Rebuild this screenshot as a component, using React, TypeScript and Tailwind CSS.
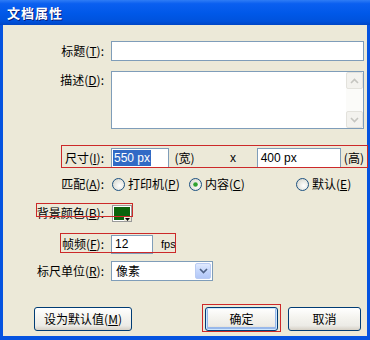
import type { ReactNode } from 'react';

const cjk = "font-['Noto_Sans_CJK_SC','Liberation_Sans',sans-serif]";
const latin = "font-['Liberation_Sans','DejaVu_Sans',sans-serif]";

function Label({ text, k }: { text: string; k: string }) {
  return (
    <span className={`block w-[101px] shrink-0 text-right text-[12px] leading-[14px] text-black ${cjk}`}>
      {text}(<u>{k}</u>):
    </span>
  );
}

function Radio({ checked, text, k, width }: { checked?: boolean; text: string; k: string; width: string }) {
  return (
    <div className={`flex items-center ${width}`}>
      <svg width="13" height="13" viewBox="0 0 13 13" className="shrink-0">
        <defs>
          <radialGradient id="rg" cx="0.6" cy="0.6" r="0.6">
            <stop offset="0" stopColor="#ffffff" />
            <stop offset="1" stopColor="#dcdcd3" />
          </radialGradient>
        </defs>
        <circle cx="6.5" cy="6.5" r="6" fill="url(#rg)" stroke="#1c5180" strokeWidth="1" />
        {checked && <circle cx="6.5" cy="6.5" r="2.3" fill="#2fa12f" />}
      </svg>
      <span className={`ml-[3px] text-[12px] leading-[14px] text-black ${cjk}`}>
        {text}(<u>{k}</u>)
      </span>
    </div>
  );
}

function XpButton({ children, isDefault, className = '' }: { children: ReactNode; isDefault?: boolean; className?: string }) {
  return (
    <div
      className={`flex h-[24px] items-center justify-center rounded-[3px] border border-[#003c74] bg-[linear-gradient(to_bottom,#ffffff_0%,#f4f3ee_45%,#ecebe6_80%,#d6d0c5_100%)] text-[12px] text-black ${cjk} ${
        isDefault ? 'shadow-[inset_0_0_0_1px_#cee7ff,inset_0_-1px_0_2px_#98b8ea]' : ''
      } ${className}`}
    >
      {children}
    </div>
  );
}

function Chevron({ up, color }: { up?: boolean; color: string }) {
  return (
    <svg width="9" height="6" viewBox="0 0 9 6">
      <path d={up ? 'M1 5 L4.5 1.5 L8 5' : 'M1 1 L4.5 4.5 L8 1'} fill="none" stroke={color} strokeWidth="1.6" />
    </svg>
  );
}

export default function App() {
  return (
    <div className="relative flex h-[340px] w-[370px] flex-col overflow-hidden bg-[#0553e0]">
      {/* title bar */}
      <div className="flex h-[25px] shrink-0 items-center bg-[linear-gradient(to_bottom,#2e7cf5_0%,#0a5ff0_15%,#0058e8_55%,#0052dc_85%,#0046c6_100%)] px-[7px]">
        <span className={`text-[13px] font-bold tracking-[1px] text-white [text-shadow:1px_1px_0_#0a1e7a] ${cjk}`}>文档属性</span>
      </div>

      {/* client area */}
      <div className="mx-[3px] mb-[4px] flex flex-1 flex-col bg-[#ece9d8] pr-[3px]">
        <div className="mt-[16px] flex h-[20px] items-center">
          <Label text="标题" k="T" />
          <div className="ml-[7px] h-[20px] flex-1 border border-[#7f9db9] bg-white" />
        </div>

        <div className="mt-[10px] flex items-start">
          <div className="shrink-0 pt-[2px]">
            <Label text="描述" k="D" />
          </div>
          <div className="ml-[7px] flex h-[58px] flex-1 border border-[#7f9db9] bg-white">
            <div className="flex-1" />
            <div className="flex w-[17px] flex-col justify-between bg-[#fbfbf9]">
              <div className="flex h-[17px] items-center justify-center rounded-[2px] border border-[#e3e2dc] bg-[#f3f2ee]">
                <Chevron up color="#c5c5c0" />
              </div>
              <div className="flex h-[17px] items-center justify-center rounded-[2px] border border-[#e3e2dc] bg-[#f3f2ee]">
                <Chevron color="#c5c5c0" />
              </div>
            </div>
          </div>
        </div>

        <div className="mt-[19px] flex h-[20px] items-center">
          <Label text="尺寸" k="I" />
          <div className="ml-[7px] flex h-[20px] w-[59px] items-center border border-[#7f9db9] bg-white pl-[1px]">
            <span className={`bg-[#316ac5] px-[1px] text-[12px] leading-[16px] text-white ${latin}`}>550 px</span>
          </div>
          <span className={`ml-[5px] w-[56px] text-[12px] text-black ${cjk}`}>(宽)</span>
          <span className={`w-[27px] text-[12px] text-black ${latin}`}>x</span>
          <div className="flex h-[20px] w-[85px] items-center border border-[#7f9db9] bg-white pl-[3px]">
            <span className={`text-[12px] text-black ${latin}`}>400 px</span>
          </div>
          <span className={`ml-[3px] text-[12px] text-black ${cjk}`}>(高)</span>
        </div>

        <div className="mt-[6px] flex h-[20px] items-center">
          <Label text="匹配" k="A" />
          <div className="ml-[8px] flex items-center">
            <Radio text="打印机" k="P" width="w-[77px]" />
            <Radio checked text="内容" k="C" width="w-[107px]" />
            <Radio text="默认" k="E" width="w-[60px]" />
          </div>
        </div>

        <div className="mt-[9px] flex h-[20px] items-center">
          <Label text="背景颜色" k="B" />
          <div className="relative ml-[8px] h-[17px] w-[20px] border border-[#9a9a9a] bg-white p-[1px]">
            <div className="h-full w-full bg-[#0b640b]" />
            <div className="absolute bottom-0 right-0 flex h-[5px] w-[7px] items-end justify-center bg-[#ece9d8]">
              <svg width="5" height="3" viewBox="0 0 5 3">
                <path d="M0 0 H5 L2.5 3 Z" fill="#000" />
              </svg>
            </div>
          </div>
        </div>

        <div className="mt-[11px] flex h-[20px] items-center">
          <Label text="帧频" k="F" />
          <div className="ml-[7px] flex h-[19px] w-[42px] items-center border border-[#7f9db9] bg-white pl-[3px]">
            <span className={`text-[12px] text-black ${latin}`}>12</span>
          </div>
          <span className={`ml-[8px] text-[11px] text-black ${latin}`}>fps</span>
        </div>

        <div className="mt-[7px] flex h-[20px] items-center">
          <Label text="标尺单位" k="R" />
          <div className="ml-[7px] flex h-[20px] w-[102px] items-center border border-[#7f9db9] bg-white p-[1px]">
            <span className={`flex-1 pl-[3px] text-[12px] text-black ${cjk}`}>像素</span>
            <div className="flex h-full w-[16px] items-center justify-center rounded-[2px] border border-[#b9cbf3] bg-[linear-gradient(to_bottom,#e1eafe_0%,#c4d6fc_50%,#b2c7f7_100%)]">
              <Chevron color="#4d6185" />
            </div>
          </div>
        </div>

        <div className="mt-[26px] flex h-[24px] items-center">
          <XpButton className="ml-[31px] w-[98px]">
            设为默认值(<u>M</u>)
          </XpButton>
          <XpButton isDefault className="ml-[73px] w-[73px]">
            确定
          </XpButton>
          <XpButton className="ml-[10px] w-[73px]">取消</XpButton>
        </div>
      </div>

      {/* red annotation boxes drawn over the dialog */}
      <div className="pointer-events-none absolute left-[61px] top-[145px] h-[23px] w-[307px] border border-[#cc2929]" />
      <div className="pointer-events-none absolute left-[36px] top-[203px] h-[14px] w-[97px] border border-[#cc2929]" />
      <div className="pointer-events-none absolute left-[60px] top-[233px] h-[20px] w-[116px] border border-[#cc2929]" />
      <div className="pointer-events-none absolute left-[202px] top-[304px] h-[28px] w-[79px] border border-[#cc2929]" />
    </div>
  );
}
